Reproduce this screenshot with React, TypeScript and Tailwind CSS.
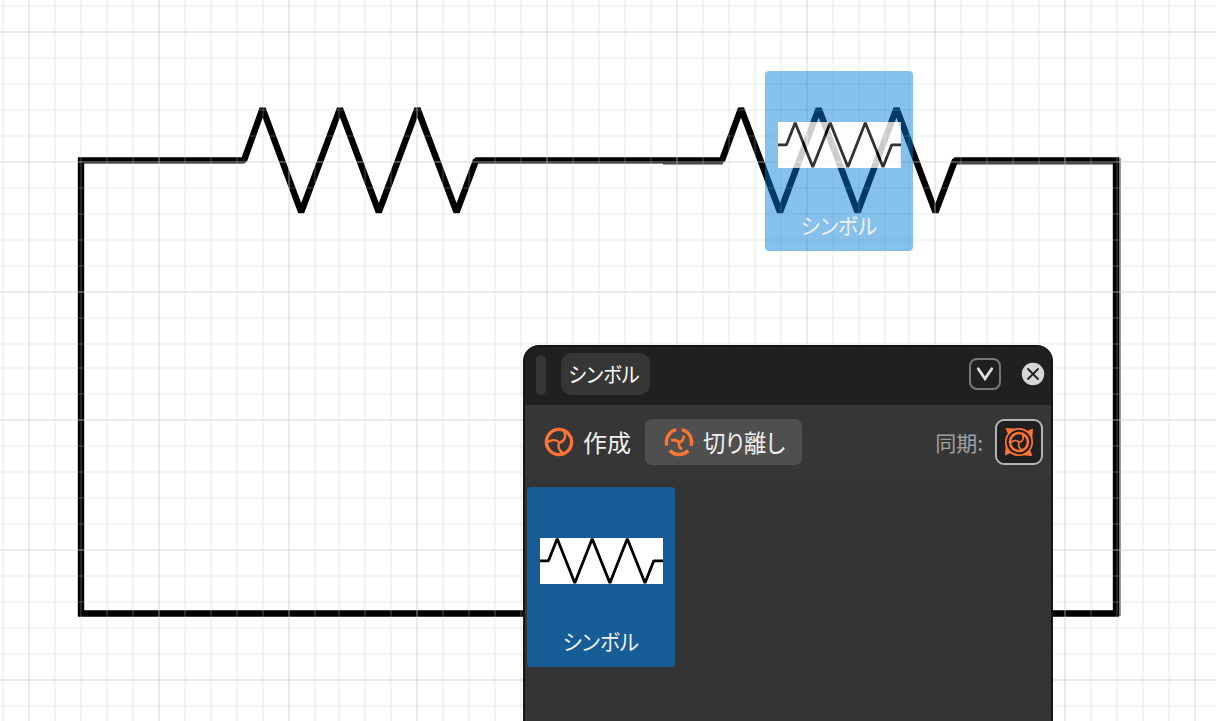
import React from 'react';

const STEP = 25.91;

const columns = Array.from({ length: 48 }, (_, i) => {
  const n = i - 1;
  return { n, at: 2 * Math.floor((29 + n * STEP) / 2) + 1 };
});
const rows = Array.from({ length: 28 }, (_, i) => {
  const n = i - 1;
  return { n, at: 2 * Math.floor((32.1 + n * STEP + 1) / 2) };
});

const gridOpacity = (n: number) => (n % 5 === 0 ? 0.36 : 0.18);

function Circuit() {
  return (
    <svg className="block h-[721px] w-[1216px]" viewBox="0 0 1216 721" fill="none">
      <path d="M663 163h60v2h-60zM957 163h156v2H957zM1119 158h2v458h-2z" fill="#999999" />
      <path
        d="M78 160.4H244L262.6 108.5L301.2 212.2L340 108.5L378.8 212.2L417.4 108.5L456.6 212.2L476 160.4H722L741 108.5L780 212.2L818.7 108.5L857.6 212.2L896.5 108.5L935.5 212.2L955 160.4H1119"
        stroke="#000"
        strokeWidth="6.4"
        strokeLinejoin="bevel"
      />
      <path d="M81 158V613.5H1116V158" stroke="#000" strokeWidth="6.4" />
      {columns.map((c) => (
        <path key={c.n} d={`M${c.at} 0V721`} stroke="#cacaca" strokeOpacity={gridOpacity(c.n)} strokeWidth="2" />
      ))}
      {rows.map((r) => (
        <path key={r.n} d={`M0 ${r.at}H1216`} stroke="#cacaca" strokeOpacity={gridOpacity(r.n)} strokeWidth="2" />
      ))}
    </svg>
  );
}

function Resistor() {
  return (
    <svg className="block h-full w-full" viewBox="0 0 123 47" preserveAspectRatio="none" fill="none">
      <path
        d="M0 23.3H8.500L17.200 0.800L34.800 46L52.200 0.800L69.900 46L87.300 0.800L105 46L113.800 23.3H123"
        stroke="#000"
        strokeWidth="2.8"
        strokeLinejoin="bevel"
      />
    </svg>
  );
}

function Swirl() {
  return (
    <g strokeWidth="2.4">
      <path d="M3.300 15.300C8 12.300 13 12.500 15.300 15.600" />
      <path d="M15.300 15.600C20.500 14.500 22.700 9.500 20 4.300" />
      <path d="M15.300 15.600C13.300 19 14.500 23.500 19 26" />
    </g>
  );
}

function CreateIcon() {
  return (
    <svg className="h-[30px] w-[30px]" viewBox="0 0 30 30" fill="none" stroke="#ff7434">
      <circle cx="15" cy="15" r="12.6" strokeWidth="3.400" />
      <Swirl />
    </svg>
  );
}

function DetachIcon() {
  return (
    <svg className="h-[30px] w-[30px]" viewBox="0 0 30 30" fill="none" stroke="#ff7434">
      <path
        d="M17.800 2.700A12.600 12.600 0 0 1 27 18.800M24.200 23.500A12.600 12.600 0 0 1 5.800 23.500M3 18.800A12.600 12.600 0 0 1 12.200 2.700"
        strokeWidth="3.4"
      />
      <g strokeWidth="2.600">
        <path d="M7 13.300C10.500 12.800 13.500 13.300 15.200 15.500" />
        <path d="M15.200 15.500C18.300 14.300 20 12 19.900 8.500" />
        <path d="M15.200 15.500C14.400 18.300 15.500 20.800 18 22.300" />
      </g>
    </svg>
  );
}

function SyncIcon() {
  return (
    <svg className="h-[30px] w-[30px]" viewBox="0 0 30 30" fill="none" stroke="#ff7434">
      <path d="M1.500 1L12 1.800L4.500 8ZM29 1.500L28.200 12L22 4.500ZM28.500 29L18 28.200L25.500 22ZM1 28.500L1.800 18L8 25.500Z" fill="#ff7434" stroke="none" />
      <circle cx="15" cy="15" r="11.800" stroke="#202020" strokeWidth="1.800" />
      <circle cx="15" cy="15" r="13.200" strokeWidth="1.700" />
      <circle cx="15" cy="15" r="9" strokeWidth="2.600" />
      <g transform="translate(4.500 4.500) scale(.7)">
        <Swirl />
      </g>
    </svg>
  );
}

export default function App() {
  return (
    <main className="relative h-[721px] w-[1216px] overflow-hidden bg-white font-['Noto_Sans_CJK_JP',sans-serif] font-normal [font-feature-settings:'palt']">
      <Circuit />

      <div className="absolute left-[765px] top-[71px] h-[180px] w-[148px] rounded-[4px] border-x-[13px] border-b-[83px] border-t-[51px] border-[#007cd7]/[.475]">
        <div className="h-[46px] w-[123px] bg-white opacity-80">
          <Resistor />
        </div>
        <p className="-mx-[13px] mt-10 scale-x-[.935] text-center text-[22px] leading-[32px] text-[#f0f0f0]">シンボル</p>
      </div>

      <section className="absolute left-[523px] top-[345px] flex h-[400px] w-[530px] flex-col overflow-hidden rounded-t-[16px] border-2 border-[#151515] bg-[#333333]">
        <header className="flex h-[58px] shrink-0 items-center bg-[#202020] pl-[11px] pr-1.5">
          <span className="-mt-0.5 h-10 w-[10px] rounded-[5px] bg-[#363636]" />
          <h1 className="-mt-1 ml-[15px] flex h-[42px] w-[89px] items-center justify-center rounded-[10px] bg-[#363636] text-[21px] leading-none text-white">
            <span className="-ml-0.5 -mt-0.5 scale-x-[.91] whitespace-nowrap">シンボル</span>
          </h1>
          <button className="-mt-1 ml-auto grid h-8 w-8 place-items-center rounded-[8px] border-2 border-[#777777]">
            <svg className="h-5 w-5" viewBox="0 0 20 20" fill="none">
              <path d="M3.200 4.800L10 14.700L16.800 4.800" stroke="#e0e0e0" strokeWidth="2.800" strokeLinecap="round" />
            </svg>
          </button>
          <button className="-mt-1 ml-5">
            <svg className="h-6 w-6" viewBox="0 0 24 24" fill="none">
              <circle cx="12" cy="12" r="11.200" fill="#d6d6d6" />
              <path d="M7 7L17 17M17 7L7 17" stroke="#202020" strokeWidth="1.800" strokeLinecap="round" />
            </svg>
          </button>
        </header>

        <div className="flex h-[74px] shrink-0 items-center bg-[#363636] pl-[19px] pr-2 text-[24px] leading-none text-[#f0f0f0]">
          <button className="flex w-[101px] items-center gap-[9px]">
            <CreateIcon />
            <span>作成</span>
          </button>
          <button className="flex h-[46px] w-[157px] items-center gap-[9px] rounded-[7px] bg-[#4f4f4f] pl-[19px]">
            <DetachIcon />
            <span className="origin-left scale-x-[.93] whitespace-nowrap">切り離し</span>
          </button>
          <span className="ml-auto text-[21px] text-[#a0a0a0]">同期:</span>
          <button className="ml-3 grid h-[46px] w-12 place-items-center rounded-[9px] border-2 border-[#b4b4b4] bg-[#202020]">
            <SyncIcon />
          </button>
        </div>

        <div className="px-0.5 pt-2">
          <div className="flex h-[180px] w-[148px] flex-col items-center rounded-[4px] bg-[#165c96] pt-[51px]">
            <div className="h-[46px] w-[123px] bg-white">
              <Resistor />
            </div>
            <p className="mt-10 scale-x-[.935] text-[22px] leading-[32px] text-[#f0f0f0]">シンボル</p>
          </div>
        </div>
      </section>
    </main>
  );
}
